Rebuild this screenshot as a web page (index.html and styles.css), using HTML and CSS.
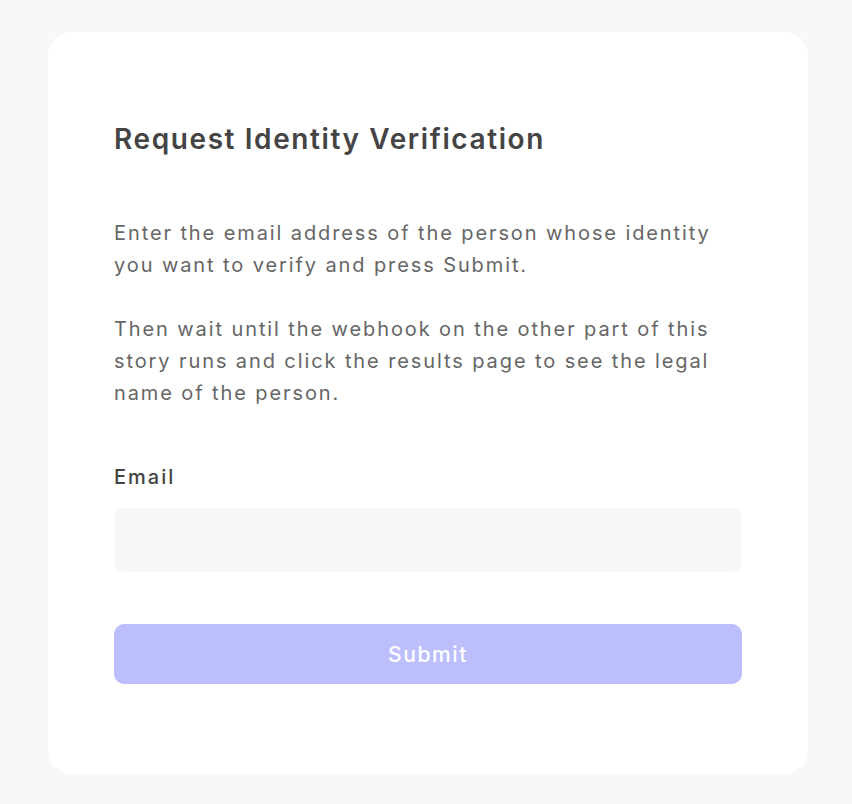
FILE: index.html
```html
<!DOCTYPE html>
<html lang="en">
<head>
<meta charset="utf-8">
<title>Request Identity Verification</title>
<link rel="stylesheet" href="styles.css">
</head>
<body>
<main class="card">
  <h1 class="title">Request Identity Verification</h1>
  <div class="intro">
    <p>Enter the email address of the person whose identity you want to verify and press Submit.</p>
    <p>Then wait until the webhook on the other part of this story runs and click the results page to see the legal name of the person.</p>
  </div>
  <form class="form">
    <label class="label" for="email">Email</label>
    <input class="input" id="email" type="email">
    <button class="submit" type="button">Submit</button>
  </form>
</main>
</body>
</html>
```
FILE: styles.css
```css
* { box-sizing: border-box; }
html, body { margin: 0; }
body {
  background: #f8f8f8;
  padding: 32px 44px 30px 48px;
  font-family: Inter, "Noto Sans", sans-serif;
}
.card {
  width: 760px;
  background: #ffffff;
  border-radius: 24px;
  padding: 66px 66px 90px;
}
.title {
  margin: 24px 0 0;
  font-size: 28px;
  line-height: 34px;
  font-weight: 600;
  letter-spacing: 1.6px;
  color: #444444;
}
.intro {
  margin-top: 61px;
  display: flex;
  flex-direction: column;
  gap: 32px;
}
.intro p {
  margin: 0;
  font-size: 20px;
  line-height: 32px;
  letter-spacing: 1.9px;
  color: #666666;
}
.form {
  display: flex;
  flex-direction: column;
  margin-top: 54px;
}
.label {
  font-size: 20px;
  line-height: 28px;
  font-weight: 500;
  letter-spacing: 2px;
  color: #444444;
}
.input {
  margin-top: 17px;
  height: 64px;
  border: none;
  border-radius: 10px;
  background: #f8f8f8;
  font: inherit;
  font-size: 20px;
  padding: 0 16px;
  outline: none;
}
.submit {
  margin-top: 52px;
  height: 60px;
  border: none;
  border-radius: 10px;
  background: #bcbffc;
  color: #ffffff;
  font-family: inherit;
  font-size: 21px;
  font-weight: 500;
  letter-spacing: 1.6px;
  padding-left: 6px;
}
```
